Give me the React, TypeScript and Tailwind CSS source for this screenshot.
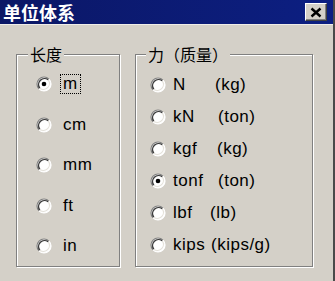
import React from 'react';

const lengthUnits = [
  { label: 'm', checked: true, focus: true },
  { label: 'cm' },
  { label: 'mm' },
  { label: 'ft' },
  { label: 'in' },
];

const forceUnits = [
  { a: 'N', b: '(kg)', w: 'w-[42px]' },
  { a: 'kN', b: '(ton)', w: 'w-[45px]' },
  { a: 'kgf', b: '(kg)', w: 'w-[44px]' },
  { a: 'tonf', b: '(ton)', w: 'w-[45px]', checked: true },
  { a: 'lbf', b: '(lb)', w: 'w-[37px]' },
  { a: 'kips', b: '(kips/g)', w: 'w-[38px]' },
];

function Radio({ checked }: { checked?: boolean }) {
  return (
    <svg width="16" height="16" viewBox="0 0 16 16" className="shrink-0">
      <circle cx="8" cy="8" r="7" fill="#fff" />
      <path d="M3.05 12.95 A7 7 0 0 1 12.95 3.05" fill="none" stroke="#808080" strokeWidth="1.2" />
      <path d="M12.95 3.05 A7 7 0 0 1 3.05 12.95" fill="none" stroke="#fff" strokeWidth="1.2" />
      <path d="M3.8 12.2 A6 6 0 0 1 12.2 3.8" fill="none" stroke="#3a3a3a" strokeWidth="1.4" />
      <path d="M12.2 3.8 A6 6 0 0 1 3.8 12.2" fill="none" stroke="#e4e1da" strokeWidth="1.2" />
      {checked && <circle cx="8" cy="8" r="2.3" fill="#000" />}
    </svg>
  );
}

export default function App() {
  return (
    <div className="w-[335px] h-[281px] bg-[#d4d0c8] flex flex-col border-r-2 border-[#4a4a4a] font-['Liberation_Sans','Noto_Sans_CJK_SC',sans-serif] text-[17px] text-black overflow-hidden">
      {/* title bar */}
      <div className="h-[24px] flex items-center justify-between pl-[3px] pr-[6px] bg-linear-to-r from-[#0b1766] to-[#0c1f82]">
        <span className="text-white font-bold text-[18px] leading-[22px] font-['Noto_Sans_CJK_SC',sans-serif]">单位体系</span>
        <div className="w-[22px] h-[18px] bg-[#d4d0c8] flex items-center justify-center border-t border-l border-white border-r border-b border-r-[#404040] border-b-[#404040] shadow-[inset_-1px_-1px_0_#808080]">
          <svg width="12" height="11" viewBox="0 0 12 11">
            <path d="M1.5 1.5 L10.5 9.5 M10.5 1.5 L1.5 9.5" stroke="#000" strokeWidth="2.4" />
          </svg>
        </div>
      </div>
      <div className="h-px bg-[#efede8]" />

      <div className="flex pl-[16px] gap-[15px] pt-[19px]">
        {/* 长度 */}
        <fieldset className="w-[104px] h-[223px] border border-[#808080] shadow-[1px_1px_0_#fff,inset_1px_1px_0_#fff]">
          <legend className="ml-[11px] px-[2px] bg-[#d4d0c8] text-[16px] leading-[20px] font-['Noto_Sans_CJK_SC',sans-serif]">长度</legend>
          <div className="flex flex-col pl-[19px]">
            {lengthUnits.map((u) => (
              <div key={u.label} className="h-[40.5px] flex items-center">
                <Radio checked={u.checked} />
                <span
                  className={
                    u.focus
                      ? 'ml-[8px] px-[2px] leading-[18px] border border-dotted border-black tracking-[0.5px]'
                      : 'ml-[8px] px-[2px] leading-[18px] border border-transparent tracking-[0.5px]'
                  }
                >
                  {u.label}
                </span>
              </div>
            ))}
          </div>
        </fieldset>

        {/* 力（质量） */}
        <fieldset className="w-[178px] h-[223px] border border-[#808080] shadow-[1px_1px_0_#fff,inset_1px_1px_0_#fff]">
          <legend className="ml-[10px] px-[2px] bg-[#d4d0c8] text-[16px] leading-[20px] font-['Noto_Sans_CJK_SC',sans-serif]">力（质量）</legend>
          <div className="flex flex-col pl-[14px] pt-[4.5px]">
            {forceUnits.map((u) => (
              <div key={u.a} className="h-[32px] flex items-center">
                <Radio checked={u.checked} />
                <span className="ml-[4px] px-[3px] flex tracking-[0.5px] leading-[18px]">
                  <span className={u.w}>{u.a}</span>
                  <span>{u.b}</span>
                </span>
              </div>
            ))}
          </div>
        </fieldset>
      </div>
    </div>
  );
}
